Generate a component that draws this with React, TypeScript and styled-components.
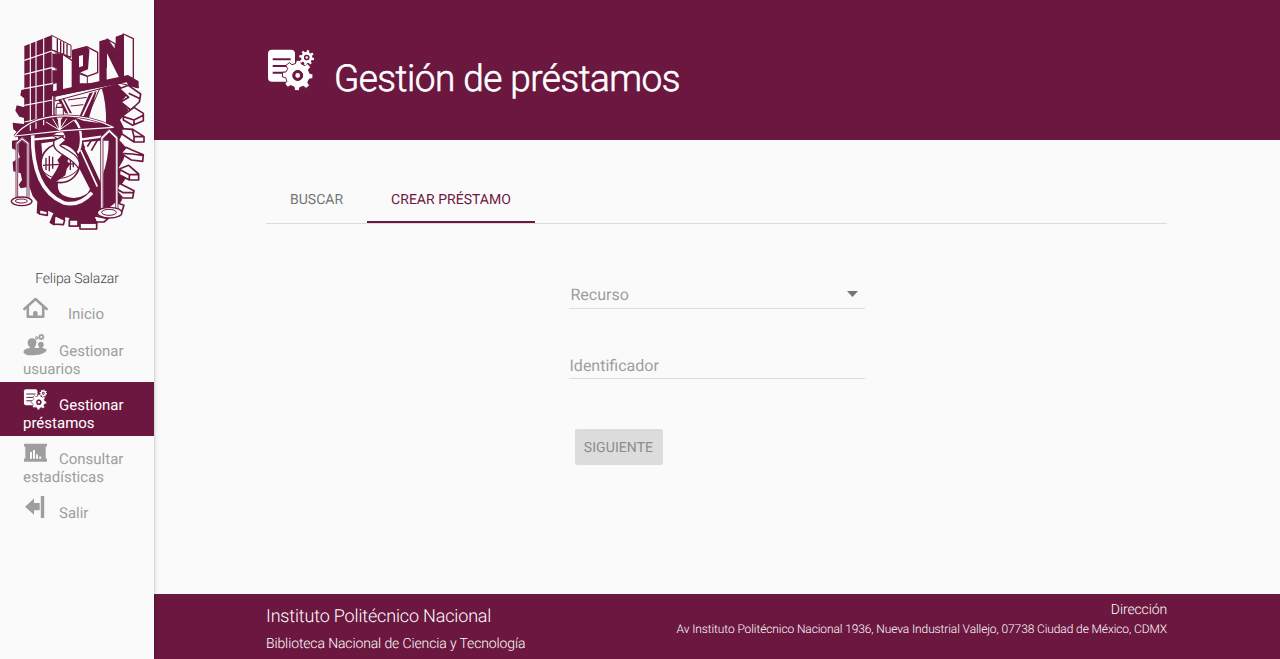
import React from 'react';
import styled, { createGlobalStyle } from 'styled-components';

const WINE = '#6b173f';
const PAPER = '#fafafa';

const GlobalStyle = createGlobalStyle`
  *, *::before, *::after { box-sizing: border-box; }
  body { margin: 0; background: ${PAPER}; font-family: Roboto, sans-serif; color: #333; text-rendering: geometricPrecision; }
  h1, p { margin: 0; font-weight: 300; }
`;

const Page = styled.div`
  display: flex;
  height: 659px;
  overflow: hidden;
`;

const Sidebar = styled.aside`
  position: relative;
  z-index: 1;
  flex: 0 0 154px;
  background: ${PAPER};
  box-shadow: 0 2px 2px 0 rgba(0, 0, 0, 0.14), 0 3px 1px -2px rgba(0, 0, 0, 0.12), 0 1px 5px 0 rgba(0, 0, 0, 0.2);
`;

const LogoSvg = styled.svg`
  display: block;
  width: 154px;
  height: 220px;
  margin-top: 20px;
`;

const UserName = styled.p`
  margin-top: 29px;
  text-align: center;
  font-size: 14px;
  line-height: 21px;
  letter-spacing: -0.009em;
  color: #444;
`;

const Menu = styled.nav`
  display: flex;
  flex-direction: column;
  padding-top: 1px;
`;

const MenuLink = styled.a<{ $active?: boolean; $height?: number }>`
  display: block;
  height: ${(p) => p.$height ?? 54}px;
  padding: 5px 23px 0;
  background: ${(p) => (p.$active ? WINE : 'transparent')};
  color: ${(p) => (p.$active ? '#fff' : '#9e9e9e')};
  font-size: 15px;
  line-height: 18px;
`;

const MenuIcon = styled.svg<{ $gap?: number }>`
  width: 25px;
  height: 25px;
  margin-right: ${(p) => p.$gap ?? 11}px;
  vertical-align: -2px;
`;

const Content = styled.div`
  flex: 1;
  display: flex;
  flex-direction: column;
`;

const Header = styled.header`
  height: 140px;
  padding: 49px 112px 0;
  background: ${WINE};
  color: #fff;
  display: flex;
  gap: 20px;
`;

const HeaderIcon = styled.svg`
  width: 48px;
  height: 44px;
`;

const Title = styled.h1`
  margin-top: 8px;
  font-size: 37px;
  font-weight: 300;
  line-height: 46px;
  letter-spacing: -0.54px;
  -webkit-text-stroke: 0.6px #fff;
`;

const Main = styled.main`
  flex: 1;
  padding: 35px 113px 0 112px;
`;

const Tabs = styled.div`
  display: flex;
  height: 49px;
  border-bottom: 1px solid #dcdcdc;
`;

const Tab = styled.button<{ $active?: boolean }>`
  height: 48px;
  padding: 3px 24px 0;
  border: 0;
  border-bottom: 2px solid ${(p) => (p.$active ? WINE : 'transparent')};
  background: none;
  color: ${(p) => (p.$active ? WINE : '#757575')};
  font: 400 14px Roboto, sans-serif;
  letter-spacing: 0.02px;
  text-rendering: geometricPrecision;
`;

const Form = styled.form`
  width: 296px;
  margin: 56px auto 0;
`;

const Field = styled.div<{ $top?: number; $indent?: number; $drop?: number }>`
  display: flex;
  align-items: center;
  justify-content: space-between;
  height: 29px;
  margin-top: ${(p) => p.$top ?? 0}px;
  padding: ${(p) => p.$drop ?? 0}px 7px 0 ${(p) => p.$indent ?? 0}px;
  border-bottom: 1px solid #dcdcdc;
  color: #9e9e9e;
  font-size: 16px;
`;

const Caret = styled.svg`
  width: 11px;
  height: 6px;
`;

const NextButton = styled.button`
  width: 88px;
  height: 36px;
  margin: 50px 0 0 6px;
  padding: 2px 0 0;
  border: 0;
  border-radius: 2px;
  background: #dcdcdc;
  color: #8c8c8c;
  font: 400 14px Roboto, sans-serif;
  letter-spacing: 0.08px;
  text-rendering: geometricPrecision;
`;

const Footer = styled.footer`
  height: 65px;
  padding: 0 113px 0 112px;
  background: ${WINE};
  color: #fff;
  display: flex;
  justify-content: space-between;
`;

const FooterColumn = styled.div<{ $right?: boolean }>`
  text-align: ${(p) => (p.$right ? 'right' : 'left')};
`;

const Line = styled.p<{ $size: number; $height: number; $top?: number }>`
  padding-top: ${(p) => p.$top ?? 0}px;
  font-size: ${(p) => p.$size}px;
  line-height: ${(p) => p.$height}px;
  letter-spacing: -0.009em;
`;

function gearPath(cx: number, cy: number, outer: number, inner: number, hole: number, teeth = 8, turn = 0) {
  const step = (Math.PI * 2) / teeth;
  const at = (r: number, a: number) => `${(cx + r * Math.cos(a)).toFixed(2)} ${(cy + r * Math.sin(a)).toFixed(2)}`;
  let d = '';
  for (let i = 0; i < teeth; i++) {
    const a = i * step + turn;
    d += `${i ? 'L' : 'M'}${at(inner, a - step * 0.3)}L${at(outer, a - step * 0.19)}L${at(outer, a + step * 0.19)}L${at(inner, a + step * 0.3)}`;
  }
  return `${d}ZM${cx - hole} ${cy}a${hole} ${hole} 0 1 0 ${hole * 2} 0a${hole} ${hole} 0 1 0 ${-hole * 2} 0Z`;
}

const LoanGlyph = () => (
  <>
    <rect x="0.3" y="0.8" width="27" height="32" rx="4" fill="#fff" />
    <path d="M5 10.2H23M5 17H21M5 23.8H17" stroke={WINE} strokeWidth="2" />
    <path d={gearPath(30, 26.5, 15.4, 12.2, 5, 8, 0.06)} fill="#fff" stroke={WINE} strokeWidth="1" />
    <circle cx="30" cy="26.5" r="3.7" fill="#fff" stroke={WINE} strokeWidth="2.6" />
    <path d={gearPath(39, 8.6, 7.6, 5.6, 2.6, 8, 0.2)} fill="#fff" />
    <circle cx="39" cy="8.6" r="2" fill="#fff" stroke={WINE} strokeWidth="1.5" />
  </>
);

const Logo = () => (
  <LogoSvg viewBox="0 0 462 660" fill={WINE} stroke={WINE} strokeWidth="4" strokeLinejoin="round">
    {/* cogwheel body with solid teeth */}
    <path stroke="none" d="M74 208L64 210L61 226L74 236V262L50 256L46 272L58 290L72 294V312L38 308L40 328L54 338V360L36 362L36 385L54 394L60 412L38 426L40 454L62 460L66 480L56 494L62 505L88 500L98 528L112 545L110 580L128 586L144 572L160 580L148 608L160 616L190 614L196 592L208 594L206 620H240V628H290L292 608L288 588L312 580L340 582L366 540L360 500L384 466L356 444L370 420L380 385L358 360L374 328L360 300L386 270L362 246L386 220L350 190H170Z" />
    {/* raised teeth on the right */}
    <g fill={PAPER} strokeWidth="5">
      <path d="M358 206L385 196L422 222L418 246L392 270L362 246L386 232ZM386 220L420 236" />
      <path d="M370 286L402 262L430 280V302L398 316L370 300ZM370 290L402 300L430 286M402 300V316" />
      <path d="M364 326L398 328L432 350V366H402L366 342ZM396 326L402 350H432M402 350V366" />
      <path d="M378 382L396 390L430 404L428 424L394 420L362 400ZM362 400L396 402L428 406" />
      <path d="M360 446L386 436L416 462V480H388L358 464ZM358 448L388 464H416M388 464V480" />
      <path d="M358 490L402 512L398 534H368L348 512ZM350 508L370 518H400" />
      <path d="M344 546L372 556L366 574L342 582L320 566Z" />
      <path d="M280 586L324 596L312 606H288ZM240 609H290V627H240Z" />
      <path d="M164 586L194 600L190 614L162 612ZM208 600H234V618H208ZM118 568L142 574L142 586L118 582Z" />
    </g>
    <path d="M246 590H280L290 609H240Z" />

    {/* open ground behind the slab and the inner ring */}
    <path stroke="none" fill={PAPER} d="M164 228L304 200Q320 250 318 312L250 302Q200 282 164 284Z" />
    <path stroke="none" fill={PAPER} d="M124 370L166 364V400L128 416ZM250 366L303 362V490L262 420ZM306 362H326Q326 420 306 470ZM174 490Q168 530 222 534Q262 530 270 508L230 430Z" />
    {/* diagonal legs */}
    <path stroke="none" d="M170 232H190L216 280H196ZM268 220L290 214L266 296L238 290ZM252 376L304 492L284 500L236 400Z" />
    <path fill="none" strokeWidth="3" d="M204 240L260 232M212 258L250 254M299 206L260 296M180 232L204 282" />
    <path fill="none" stroke={PAPER} strokeWidth="5" d="M282 216L246 292M184 234L208 282M242 390L292 500M256 384L302 478" />
    <path fill="none" strokeWidth="5" d="M262 380L282 348M274 392L302 344" />
    {/* shield rim */}
    <path fill="none" stroke={PAPER} strokeWidth="11" d="M98 342C96 445 125 520 190 548C225 558 252 544 276 518" />
    {/* inner disc and cross bars */}
    <path stroke="none" d="M190 292Q238 292 240 356Q240 390 228 398L190 380Z" />
    <path fill="none" stroke={PAPER} strokeWidth="7" d="M224 300Q243 320 243 356Q243 386 232 400M103 358L166 352M246 358L304 350" />
    {/* statue */}
    <path strokeWidth="3" fill={PAPER} d="M172 250H186V262L190 266V292L184 300V330L192 338L198 352L178 372C184 394 238 390 240 440C224 410 208 408 180 398C152 386 154 368 176 358L156 346L176 334L172 300L168 290V264Z" />
    <path fill="none" strokeWidth="4" d="M168 262H188M168 290H190M160 346L192 348" />
    {/* globe */}
    <circle cx="181" cy="430" r="58" fill={PAPER} strokeWidth="5" />
    <path stroke="none" d="M187 403L212 406L202 424L210 432L200 448L196 466L154 496L144 490L168 452L178 432L172 420Z" />
    <path fill="none" strokeWidth="4" d="M129 436L232 430M138 414V450M148 408V454M158 410V446M220 420V442M211 414V450" />
    <path fill="none" strokeWidth="3" d="M128 452C160 488 210 478 236 446" />
    <path fill={PAPER} strokeWidth="4" d="M162 362C152 402 210 402 236 446C250 410 206 394 180 376L198 360L186 350Z" />
    {/* tower */}
    <path stroke="none" d="M73 78L155 46V300L73 330Z" />
    <path fill="none" stroke={PAPER} strokeWidth="3.5" d="M91 70V332M108 63V326M131 55V316M73 121L155 93L170 98M73 163L155 143L170 148M73 206L155 191L170 194M73 256L158 240M73 306L155 290M158 228V288" />
    <path fill={PAPER} d="M155 46L213 76V112L186 104V212L158 222V192L168 188V94L155 90Z" strokeWidth="3" />
    <path stroke="none" d="M170 98L190 104V214H170ZM157 100L170 103V145L157 142ZM157 150L170 152V190L157 188Z" />
    <path fill="none" strokeWidth="4" d="M155 90L213 112M172 57V96M182 62V100M191 67V104M201 72V107" />
    {/* letter blocks over the slab */}
    <path fill={PAPER} strokeWidth="4" d="M187 102L217 122V206L187 212Z" />
    <path fill={PAPER} strokeWidth="4" d="M218 91L260 80L293 97V158L262 169L236 160V199L218 203Z" />
    <path stroke="none" d="M218 91L260 80L268 88V96L264 148L239 158V204H218ZM298 64L321 57L347 94V50L370 42V184L344 188L320 142V194L298 198Z" />
    <path stroke="none" fill={PAPER} d="M237 108L249 105V138L237 142Z" />
    <path fill={PAPER} strokeWidth="4" d="M370 42L400 56V174L370 181ZM321 57L346 72V92Z" />
    <path stroke="none" fill={PAPER} d="M321 100L362 182L321 190Z" />
    <path fill="none" strokeWidth="3" d="M262 168V196M240 158L262 168" />
    {/* slab */}
    <path strokeWidth="3" fill={PAPER} d="M165 229L378 183L388 190L415 200V204L386 196L360 190L165 243Z" />
    <path stroke="none" d="M158 214L384 165L416 184V204L386 198L380 187L158 230Z" />
    {/* balance beam with its arch */}
    <path fill="none" strokeWidth="8" d="M44 348C100 276 236 270 340 322L192 332L44 348" />
    <path fill="none" stroke={PAPER} strokeWidth="3.5" d="M44 348C100 276 236 270 340 322L192 332L44 348" />
    <path fill="none" stroke={PAPER} strokeWidth="3" d="M178 330L138 306M178 330L158 296M178 330L200 296M178 330L222 300" />
    {/* scales */}
    <g fill="none" stroke={PAPER} strokeWidth="8">
      <path d="M51 536V370L66 356L84 370V536M306 574V354L328 332L350 354V574" />
    </g>
    <g fill="none" strokeWidth="2.5">
      <path d="M48 536V368L66 353L87 368V536M53 536V371L66 360L81 371V536" />
      <path d="M302 576V352L328 328L354 352V576M309 576V356L328 338L347 356V576" />
    </g>
    <g fill={PAPER} strokeWidth="4">
      <ellipse cx="65" cy="544" rx="31" ry="13" />
      <ellipse cx="64" cy="543" rx="18" ry="6" strokeWidth="3" />
      <ellipse cx="329" cy="578" rx="37" ry="16" />
      <ellipse cx="327" cy="577" rx="22" ry="9" strokeWidth="3" />
    </g>
  </LogoSvg>
);

const App = () => (
  <>
    <GlobalStyle />
    <Page>
      <Sidebar>
        <Logo />
        <UserName>Felipa Salazar</UserName>
        <Menu>
          <MenuLink $height={37}>
            <MenuIcon $gap={20} viewBox="0 0 25 25">
              <path d="M1.4 13L12.5 3L23.6 13M4.8 11V20.8H20.2V11" fill="none" stroke="currentColor" strokeWidth="2.6" strokeLinejoin="round" strokeLinecap="round" />
              <path d="M10 21.5V16.5Q10 15 12.4 15Q14.6 15 14.6 16.5V21.5Z" fill="currentColor" />
            </MenuIcon>
            Inicio
          </MenuLink>
          <MenuLink>
            <MenuIcon viewBox="0 0 25 25" fill="currentColor">
              <path d="M0.5 19.5Q0 15.6 7 15L6.7 14.3Q4.3 12 4.6 9A4.5 4.5 0 0 1 13.5 9Q13.5 12 11.4 14.5L13 15L16.5 14.8Q14.8 12.5 15 11A3 3 0 0 1 20.8 11Q21 13 19.3 14.8L24 16.6Q22 21.5 13 22Q3 23.4 0.5 19.5Z" />
              <path fillRule="evenodd" d={gearPath(18.3, 4, 3.3, 2.6, 1.1)} />
              <path fillRule="evenodd" d={gearPath(13.7, 5, 1.9, 1.4, 0.5)} />
            </MenuIcon>
            Gestionar usuarios
          </MenuLink>
          <MenuLink $active>
            <MenuIcon viewBox="-1.6 -3.8 50 50"><LoanGlyph /></MenuIcon>
            Gestionar préstamos
          </MenuLink>
          <MenuLink>
            <MenuIcon viewBox="0 0 25 25" fill="currentColor">
              <path d="M1 2.8H24V5.4H22.7V17.6H24V20.8H1V17.6H2.3V5.4H1Z" />
              <path d="M7 17.7V11H9V17.7ZM10 17.7V9H12V17.7ZM13 17.7V13.4H15V17.7ZM16.2 17.7V15.6H18.2V17.7Z" fill={PAPER} />
            </MenuIcon>
            Consultar estadísticas
          </MenuLink>
          <MenuLink>
            <MenuIcon viewBox="0 0 25 25" fill="currentColor">
              <path d="M2 11.7L11 3.5V8H16.7V15.3H11V19.8ZM17.8 1H21.2V23H17.8Z" />
            </MenuIcon>
            Salir
          </MenuLink>
        </Menu>
      </Sidebar>
      <Content>
        <Header>
          <HeaderIcon viewBox="-1.7 0 48 44"><LoanGlyph /></HeaderIcon>
          <Title>Gestión de préstamos</Title>
        </Header>
        <Main>
          <Tabs>
            <Tab>BUSCAR</Tab>
            <Tab $active>CREAR PRÉSTAMO</Tab>
          </Tabs>
          <Form>
            <Field $indent={2}>
              Recurso
              <Caret viewBox="0 0 11 6"><path d="M0 0H11L5.5 6Z" fill="#757575" /></Caret>
            </Field>
            <Field $top={41} $indent={1} $drop={2}>Identificador</Field>
            <NextButton type="button">SIGUIENTE</NextButton>
          </Form>
        </Main>
        <Footer>
          <FooterColumn>
            <Line $size={18} $height={27} $top={9}>Instituto Politécnico Nacional</Line>
            <Line $size={14} $height={27} $top={1}>Biblioteca Nacional de Ciencia y Tecnología</Line>
          </FooterColumn>
          <FooterColumn $right>
            <Line $size={14} $height={20} $top={6}>Dirección</Line>
            <Line $size={12} $height={18}>Av Instituto Politécnico Nacional 1936, Nueva Industrial Vallejo, 07738 Ciudad de México, CDMX</Line>
          </FooterColumn>
        </Footer>
      </Content>
    </Page>
  </>
);

export default App;
